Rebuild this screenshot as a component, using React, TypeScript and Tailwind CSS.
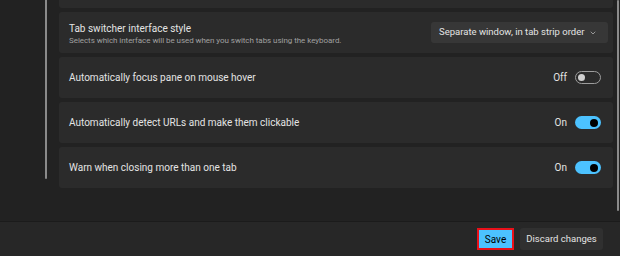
import { ChevronDown } from 'lucide-react'

function Toggle({ on }: { on: boolean }) {
  return on ? (
    <div className="w-[26px] h-[13px] rounded-full bg-[#4cc2ff] flex items-center justify-end pr-[3px]">
      <div className="w-[8px] h-[8px] rounded-full bg-black" />
    </div>
  ) : (
    <div className="w-[26px] h-[13px] rounded-full border border-[#9d9d9d] flex items-center pl-[2px]">
      <div className="w-[7px] h-[7px] rounded-full bg-[#d0d0d0]" />
    </div>
  )
}

function ToggleRow({ label, on }: { label: string; on: boolean }) {
  return (
    <div className="h-[41px] rounded-[3px] bg-[#2b2b2b] flex items-center pl-[10px] pr-[12px]">
      <span className="flex-1 text-[10px] text-[#e4e4e4] whitespace-nowrap">{label}</span>
      <span className="text-[10px] text-[#e4e4e4] mr-[8px]">{on ? 'On' : 'Off'}</span>
      <Toggle on={on} />
    </div>
  )
}

export default function App() {
  return (
    <div
      className="w-[620px] h-[256px] flex flex-col bg-[#222222] overflow-hidden"
      style={{ fontFamily: 'Roboto, "Liberation Sans", sans-serif' }}
    >
      <div className="flex-1 flex min-h-0">
        <div className="w-[47px] flex justify-end">
          <div className="w-[2px] h-[179px] bg-[#8a8a8a] rounded-b" />
        </div>

        <div className="flex-1 pl-[12px] flex flex-col gap-[4px]">
          <div className="h-[8px] rounded-b-[3px] bg-[#2b2b2b]" />

          <div className="h-[41px] rounded-[3px] bg-[#2b2b2b] flex items-center pl-[10px] pr-[5px]">
            <div className="flex-1 flex flex-col pt-[2px]">
              <span className="text-[10px] leading-[13px] text-[#e4e4e4]">Tab switcher interface style</span>
              <span className="text-[8px] leading-[11px] text-[#a0a0a0] whitespace-nowrap tracking-[-0.05px]">
                Selects which interface will be used when you switch tabs using the keyboard.
              </span>
            </div>
            <div className="shrink-0 w-[177px] h-[21px] rounded-[3px] bg-[#373737] flex items-center pl-[8px] pr-[11px]">
              <span className="flex-1 text-[9.5px] text-[#e4e4e4] whitespace-nowrap">Separate window, in tab strip order</span>
              <ChevronDown size={8} strokeWidth={2} className="text-[#c8c8c8] shrink-0" />
            </div>
          </div>

          <ToggleRow label="Automatically focus pane on mouse hover" on={false} />
          <ToggleRow label="Automatically detect URLs and make them clickable" on={true} />
          <ToggleRow label="Warn when closing more than one tab" on={true} />
        </div>

        <div className="w-[7px] flex justify-end pr-[1px]">
          <div className="w-[2px] h-[211px] bg-[#8b8b8b] rounded-full" />
        </div>
      </div>

      <div className="h-[35px] border-t border-[#1b1b1b] bg-[#272727] flex items-center justify-end gap-[6px] pr-[17px]">
        <div className="w-[37px] h-[22px] border-[2px] border-[#e8111a] bg-[#4cc2ff] flex items-center justify-center">
          <span className="text-[10px] text-black">Save</span>
        </div>
        <div className="w-[83px] h-[22px] rounded-[3px] bg-[#303030] flex items-center justify-center">
          <span className="text-[9.5px] text-[#e4e4e4] whitespace-nowrap">Discard changes</span>
        </div>
      </div>
    </div>
  )
}
